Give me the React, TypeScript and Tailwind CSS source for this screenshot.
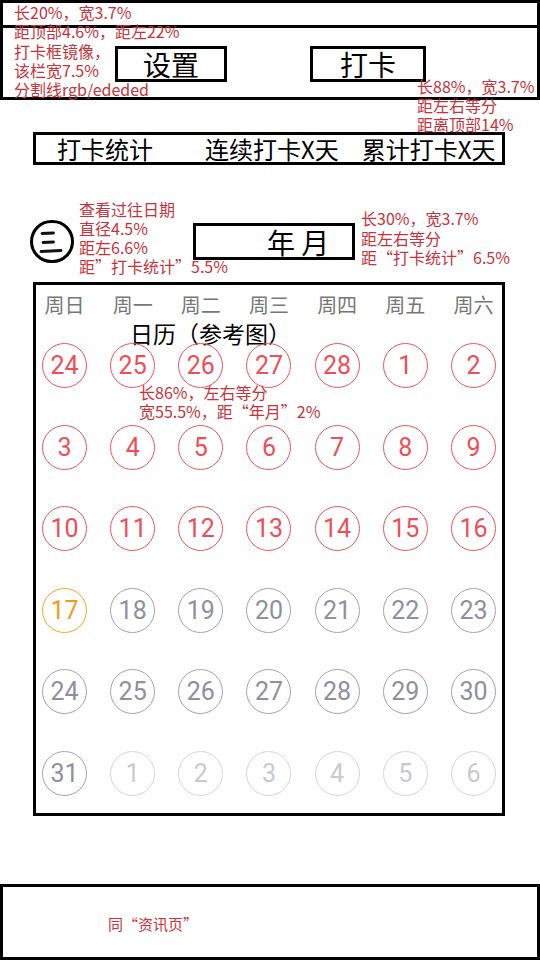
import React from "react";

type Tone = "red" | "orange" | "gray" | "light";

const TONE: Record<Tone, string> = {
  red: "border-[#f0545c] text-[#ee4f57]",
  orange: "border-[#f5a623] text-[#f29b1a]",
  gray: "border-[#a3a3b0] text-[#8f8f9f]",
  light: "border-[#d6d6da] text-[#c9c9ce]",
};

const WEEK = ["周日", "周一", "周二", "周三", "周四", "周五", "周六"];

const ROWS: { n: number; t: Tone }[][] = [
  [24, 25, 26, 27, 28, 1, 2].map((n) => ({ n, t: "red" as Tone })),
  [3, 4, 5, 6, 7, 8, 9].map((n) => ({ n, t: "red" as Tone })),
  [10, 11, 12, 13, 14, 15, 16].map((n) => ({ n, t: "red" as Tone })),
  [17, 18, 19, 20, 21, 22, 23].map((n, i) => ({ n, t: (i === 0 ? "orange" : "gray") as Tone })),
  [24, 25, 26, 27, 28, 29, 30].map((n) => ({ n, t: "gray" as Tone })),
  [31, 1, 2, 3, 4, 5, 6].map((n, i) => ({ n, t: (i === 0 ? "gray" : "light") as Tone })),
];

// red sticky notes laid over the wireframe
function Note({ lines, className }: { lines: string[]; className: string }) {
  return (
    <div className={`absolute text-[16px] text-[#c8323a] whitespace-nowrap pointer-events-none ${className}`}>
      {lines.map((l, i) => (
        <div key={i}>{l}</div>
      ))}
    </div>
  );
}

function MenuIcon() {
  return (
    <div className="w-[44px] h-[43px] rounded-full border-[3px] border-black flex items-center justify-center shrink-0">
      <svg width="38" height="37" viewBox="0 0 38 37" fill="none">
        <path d="M9 10.5 L20.5 10" stroke="#111" strokeWidth="2.8" strokeLinecap="round" />
        <path d="M10 19.5 L20.5 19" stroke="#111" strokeWidth="2.8" strokeLinecap="round" />
        <path d="M8 28.5 L28 27.5" stroke="#111" strokeWidth="2.8" strokeLinecap="round" />
      </svg>
    </div>
  );
}

export default function App() {
  return (
    <div className="relative w-[540px] h-[960px] bg-white overflow-hidden flex flex-col font-['Noto_Sans_CJK_SC',sans-serif] text-black">
      {/* top bar */}
      <header className="h-[100px] border-[3px] border-black flex flex-col shrink-0">
        <div className="h-[25px] border-b-[3px] border-black" />
        <div className="flex items-start pt-[18px] pl-[112px]">
          <div className="w-[112px] h-[36px] border-[3px] border-black flex items-center justify-center text-[28px] leading-none">
            设置
          </div>
          <div className="ml-[83px] w-[116px] h-[36px] border-[3px] border-black flex items-center justify-center text-[28px] leading-none">
            打卡
          </div>
        </div>
      </header>

      {/* stats */}
      <div className="mt-[32px] ml-[33px] w-[472px] h-[33px] border-[3px] border-black flex items-center pl-[21px] text-[24px] leading-none whitespace-nowrap">
        <span>打卡统计</span>
        <span className="ml-[52px]">连续打卡X天</span>
        <span className="ml-[23px]">累计打卡X天</span>
      </div>

      {/* history + month */}
      <div className="mt-[55px] ml-[30px] flex items-center">
        <MenuIcon />
        <div className="ml-[119px] w-[162px] h-[37px] border-[3px] border-black flex items-center pl-[71px] text-[28px] leading-none whitespace-pre">
          年 月
        </div>
      </div>

      {/* calendar */}
      <div className="mt-[19px] ml-[33px] w-[472px] h-[534px] border-[3px] border-black px-[6px] pt-[8px]">
        <div className="grid grid-cols-[repeat(7,45px)] justify-between text-[20px] leading-[24px] text-[#777777] text-center whitespace-nowrap">
          {WEEK.map((w) => (
            <div key={w} className="flex justify-center">
              {w}
            </div>
          ))}
        </div>
        <div className="ml-[88px] mt-[6px] h-[20px] text-[23px] leading-[20px] whitespace-nowrap">日历（参考图）</div>
        <div className="mt-[0px] grid grid-cols-[repeat(7,45px)] justify-between gap-y-[36.6px] font-['Roboto',sans-serif]">
          {ROWS.flat().map((d, i) => (
            <div
              key={i}
              className={`w-[45px] h-[45px] rounded-full border-[1.5px] flex items-center justify-center text-[25px] leading-none ${TONE[d.t]}`}
            >
              {d.n}
            </div>
          ))}
        </div>
      </div>

      {/* bottom bar */}
      <footer className="mt-auto h-[76px] border-[3px] border-black shrink-0" />

      <Note
        className="top-[3px] left-[14px] leading-[19.3px]"
        lines={["长20%，宽3.7%", "距顶部4.6%，距左22%", "打卡框镜像，", "该栏宽7.5%", "分割线rgb/ededed"]}
      />
      <Note className="top-[77px] left-[417px] leading-[19px]" lines={["长88%，宽3.7%", "距左右等分", "距离顶部14%"]} />
      <Note
        className="top-[200px] left-[79px] leading-[19px]"
        lines={["查看过往日期", "直径4.5%", "距左6.6%", "距”打卡统计”5.5%"]}
      />
      <Note
        className="top-[209px] left-[361px] leading-[19.5px]"
        lines={["长30%，宽3.7%", "距左右等分", "距“打卡统计”6.5%"]}
      />
      <Note className="top-[383px] left-[139px] leading-[19px]" lines={["长86%，左右等分", "宽55.5%，距“年月”2%"]} />
      <Note className="top-[914px] left-[108px] leading-[20px] !text-[15px]" lines={["同“资讯页”"]} />
    </div>
  );
}
